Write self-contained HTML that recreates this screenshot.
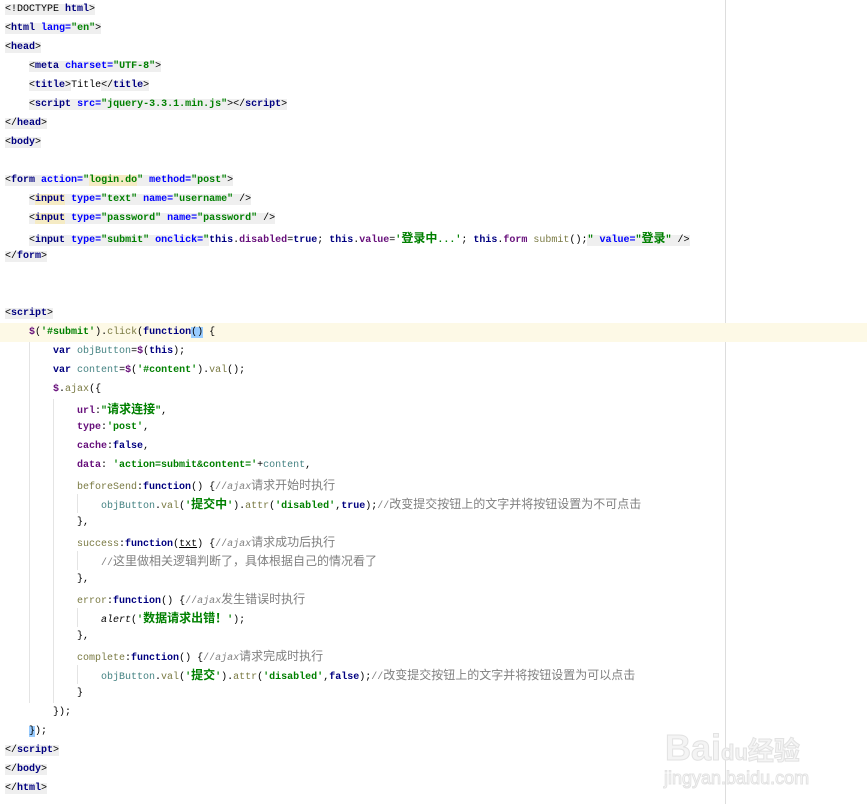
<!DOCTYPE html>
<html><head><meta charset="utf-8"><style>
body{margin:0;width:867px;height:804px;background:#fff;position:relative;overflow:hidden;font-family:"Liberation Mono","Noto Sans CJK SC",monospace;font-size:10px;}
.l{position:absolute;left:5px;height:19px;line-height:19px;white-space:pre;color:#000;}
.z{font-family:"Noto Sans CJK SC",sans-serif;font-size:12px;}
.t{color:#000080;font-weight:bold}.a{color:#0000ff;font-weight:bold}.s{color:#008000;font-weight:bold}
.g{background:#efefef}.k{color:#000080;font-weight:bold}.p{color:#660e7a;font-weight:bold}
.c{color:#808080}.f{color:#7a7a43}.v{color:#458383}.o{color:#7a7a43}
.gut{position:absolute;left:0;width:4px;height:9px;border:1px solid #ccc;border-left:none;}
.vg{position:absolute;width:1px;background:#e4e4e4}
</style></head><body>
<div style="position:absolute;left:725px;top:0;width:1px;height:804px;background:#ddd"></div>
<div style="position:absolute;left:0;top:323px;width:867px;height:19px;background:#fdf9e6"></div>
<div class="vg" style="left:29px;top:342px;height:361px"></div>
<div class="vg" style="left:53px;top:399px;height:304px"></div>
<div class="vg" style="left:77px;top:494px;height:19px"></div>
<div class="vg" style="left:77px;top:551px;height:19px"></div>
<div class="vg" style="left:77px;top:608px;height:19px"></div>
<div class="vg" style="left:77px;top:665px;height:19px"></div>

<div class="l" style="top:0"><span class="g">&lt;!DOCTYPE <span class="t">html</span>&gt;</span></div>
<div class="l" style="top:19px"><span class="g">&lt;<span class="t">html</span> <span class="a">lang=</span><span class="s">"en"</span>&gt;</span></div>
<div class="l" style="top:38px"><span class="g">&lt;<span class="t">head</span>&gt;</span></div>
<div class="l" style="top:57px">    <span class="g">&lt;<span class="t">meta</span> <span class="a">charset=</span><span class="s">"UTF-8"</span>&gt;</span></div>
<div class="l" style="top:76px">    <span class="g">&lt;<span class="t">title</span>&gt;</span>Title<span class="g">&lt;/<span class="t">title</span>&gt;</span></div>
<div class="l" style="top:95px">    <span class="g">&lt;<span class="t">script</span> <span class="a">src=</span><span class="s">"jquery-3.3.1.min.js"</span>&gt;&lt;/<span class="t">script</span>&gt;</span></div>
<div class="l" style="top:114px"><span class="g">&lt;/<span class="t">head</span>&gt;</span></div>
<div class="l" style="top:133px"><span class="g">&lt;<span class="t">body</span>&gt;</span></div>
<div class="l" style="top:171px"><span class="g">&lt;<span class="t">form</span> <span class="a">action=</span><span class="s">"<span style="background:#f5ebc4">login.do</span>"</span> <span class="a">method=</span><span class="s">"post"</span>&gt;</span></div>
<div class="l" style="top:190px">    <span class="g">&lt;<span class="t" style="background:#f5ebc4">input</span> <span class="a">type=</span><span class="s">"text"</span> <span class="a">name=</span><span class="s">"username"</span> /&gt;</span></div>
<div class="l" style="top:209px">    <span class="g">&lt;<span class="t" style="background:#f5ebc4">input</span> <span class="a">type=</span><span class="s">"password"</span> <span class="a">name=</span><span class="s">"password"</span> /&gt;</span></div>
<div class="l" style="top:228px">    <span class="g">&lt;<span class="t">input</span> <span class="a">type=</span><span class="s">"submit"</span> <span class="a">onclick=</span><span class="s">"</span></span><span class="k">this</span>.<span class="p">disabled</span>=<span class="k">true</span>; <span class="k">this</span>.<span class="p">value</span>=<span class="s">'<span class="z">登录中</span>...'</span>; <span class="k">this</span>.<span class="p">form</span> <span class="f">submit</span>();<span class="g"><span class="s">"</span> <span class="a">value=</span><span class="s">"<span class="z">登录</span>"</span> /&gt;</span></div>
<div class="l" style="top:247px"><span class="g">&lt;/<span class="t">form</span>&gt;</span></div>
<div class="l" style="top:304px"><span class="g">&lt;<span class="t">script</span>&gt;</span></div>
<div class="l" style="top:323px">    <span class="p">$</span>(<span class="s">'#submit'</span>).<span class="f">click</span>(<span class="k">function</span><span style="background:#99ccff">()</span> {</div>
<div class="l" style="top:342px">        <span class="k">var</span> <span class="v">objButton</span>=<span class="p">$</span>(<span class="k">this</span>);</div>
<div class="l" style="top:361px">        <span class="k">var</span> <span class="v">content</span>=<span class="p">$</span>(<span class="s">'#content'</span>).<span class="f">val</span>();</div>
<div class="l" style="top:380px">        <span class="p">$</span>.<span class="f">ajax</span>({</div>
<div class="l" style="top:399px">            <span class="p">url</span>:<span class="s">"<span class="z">请求连接</span>"</span>,</div>
<div class="l" style="top:418px">            <span class="p">type</span>:<span class="s">'post'</span>,</div>
<div class="l" style="top:437px">            <span class="p">cache</span>:<span class="k">false</span>,</div>
<div class="l" style="top:456px">            <span class="p">data</span>: <span class="s">'action=submit&amp;content='</span>+<span class="v">content</span>,</div>
<div class="l" style="top:475px">            <span class="o">beforeSend</span>:<span class="k">function</span>() {<span class="c">//<i>ajax</i><span class="z">请求开始时执行</span></span></div>
<div class="l" style="top:494px">                <span class="v">objButton</span>.<span class="f">val</span>(<span class="s">'<span class="z">提交中</span>'</span>).<span class="f">attr</span>(<span class="s">'disabled'</span>,<span class="k">true</span>);<span class="c">//<span class="z">改变提交按钮上的文字并将按钮设置为不可点击</span></span></div>
<div class="l" style="top:513px">            },</div>
<div class="l" style="top:532px">            <span class="o">success</span>:<span class="k">function</span>(<u>txt</u>) {<span class="c">//<i>ajax</i><span class="z">请求成功后执行</span></span></div>
<div class="l" style="top:551px">                <span class="c">//<span class="z">这里做相关逻辑判断了，具体根据自己的情况看了</span></span></div>
<div class="l" style="top:570px">            },</div>
<div class="l" style="top:589px">            <span class="o">error</span>:<span class="k">function</span>() {<span class="c">//<i>ajax</i><span class="z">发生错误时执行</span></span></div>
<div class="l" style="top:608px">                <i>alert</i>(<span class="s">'<span class="z">数据请求出错！</span>'</span>);</div>
<div class="l" style="top:627px">            },</div>
<div class="l" style="top:646px">            <span class="o">complete</span>:<span class="k">function</span>() {<span class="c">//<i>ajax</i><span class="z">请求完成时执行</span></span></div>
<div class="l" style="top:665px">                <span class="v">objButton</span>.<span class="f">val</span>(<span class="s">'<span class="z">提交</span>'</span>).<span class="f">attr</span>(<span class="s">'disabled'</span>,<span class="k">false</span>);<span class="c">//<span class="z">改变提交按钮上的文字并将按钮设置为可以点击</span></span></div>
<div class="l" style="top:684px">            }</div>
<div class="l" style="top:703px">        });</div>
<div class="l" style="top:722px">    <span style="background:#99ccff">}</span>);</div>
<div class="l" style="top:741px"><span class="g">&lt;/<span class="t">script</span>&gt;</span></div>
<div class="l" style="top:760px"><span class="g">&lt;/<span class="t">body</span>&gt;</span></div>
<div class="l" style="top:779px"><span class="g">&lt;/<span class="t">html</span>&gt;</span></div>

<div style="position:absolute;left:665px;top:727px;font-family:'Liberation Sans',sans-serif;font-size:36px;color:#f4f4f4;-webkit-text-stroke:1px #e2e2e2;font-weight:bold">Bai<span style="font-size:22px">du</span><span style="font-family:'Noto Sans CJK SC';font-size:26px">经验</span></div>
<div style="position:absolute;left:664px;top:768px;font-family:'Liberation Sans',sans-serif;font-size:18px;color:#fff;-webkit-text-stroke:1px #e2e2e2">jingyan.baidu.com</div>
</body></html>
